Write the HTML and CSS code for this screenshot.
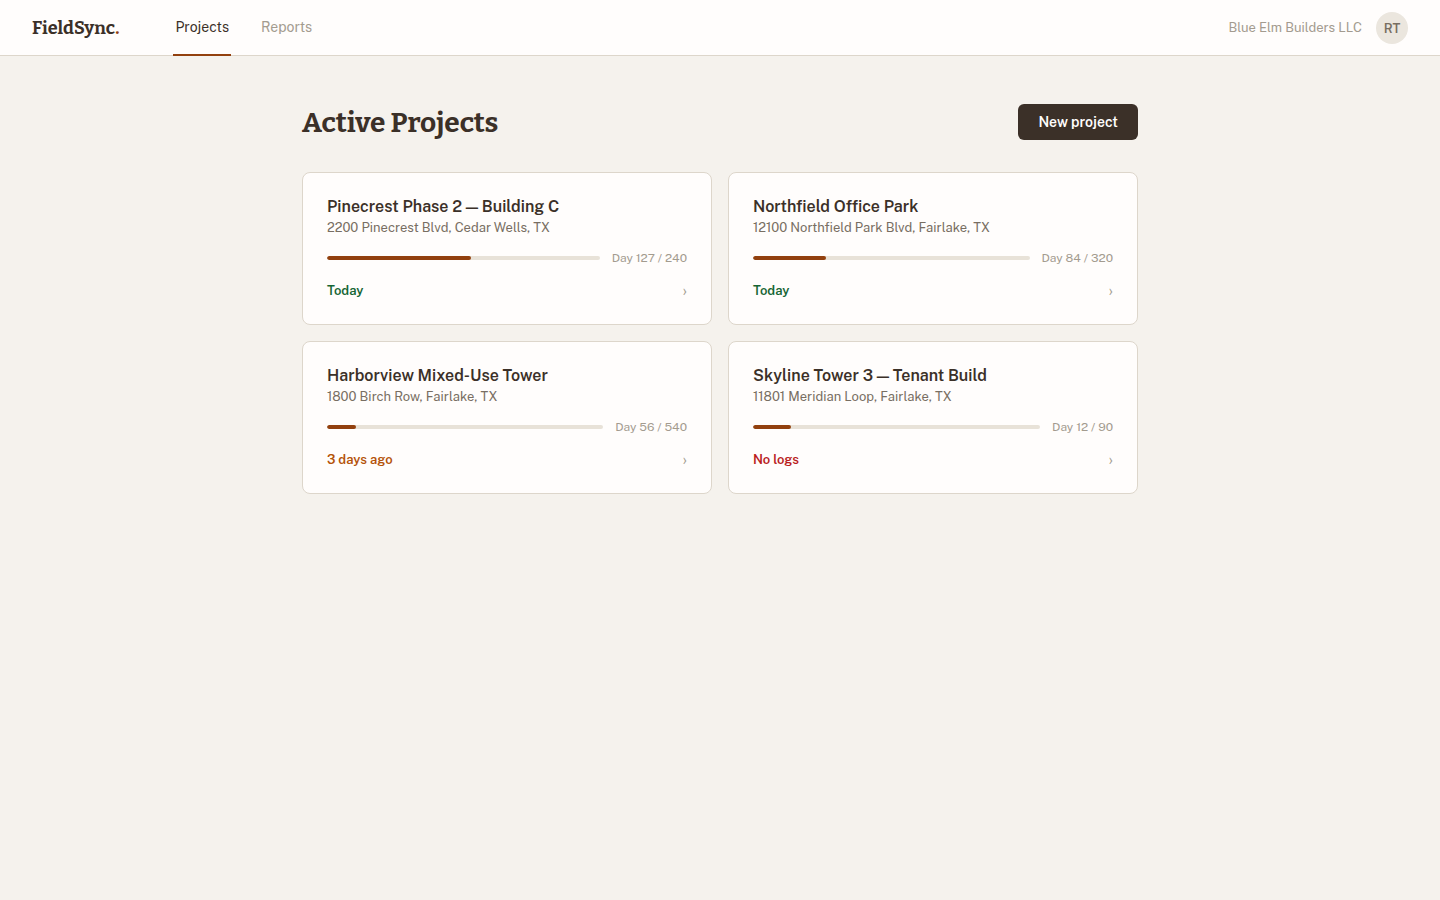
FILE: index.html
```html
<!DOCTYPE html>
<html lang="en">
<head>
<meta charset="utf-8">
<meta name="viewport" content="width=device-width, initial-scale=1">
<title>FieldSync – Active Projects</title>
<link rel="stylesheet" href="styles.css">
</head>
<body>
<header class="topbar">
  <a class="brand" href="#">FieldSync<span class="brand-dot">.</span></a>
  <nav class="tabs">
    <a class="tab tab-active" href="#" aria-current="page">Projects</a>
    <a class="tab" href="#">Reports</a>
  </nav>
  <div class="account">
    <span class="company">Blue Elm Builders LLC</span>
    <button class="avatar" type="button" aria-label="Account: RT">RT</button>
  </div>
</header>
<main class="page">
  <div class="page-head">
    <h1 class="page-title">Active Projects</h1>
    <button class="primary" type="button">New project</button>
  </div>
  <div class="projects">
    <a class="card" href="#">
      <h2 class="card-title">Pinecrest Phase 2 — Building C</h2>
      <p class="address">2200 Pinecrest Blvd, Cedar Wells, TX</p>
      <div class="progress">
        <div class="track"><div class="fill" style="width:52.9%"></div></div>
        <span class="days">Day 127 / 240</span>
      </div>
      <div class="card-foot"><span class="status status-ok">Today</span><span class="chevron">›</span></div>
    </a>
    <a class="card" href="#">
      <h2 class="card-title">Northfield Office Park</h2>
      <p class="address">12100 Northfield Park Blvd, Fairlake, TX</p>
      <div class="progress">
        <div class="track"><div class="fill" style="width:26.25%"></div></div>
        <span class="days">Day 84 / 320</span>
      </div>
      <div class="card-foot"><span class="status status-ok">Today</span><span class="chevron">›</span></div>
    </a>
    <a class="card" href="#">
      <h2 class="card-title">Harborview Mixed-Use Tower</h2>
      <p class="address">1800 Birch Row, Fairlake, TX</p>
      <div class="progress">
        <div class="track"><div class="fill" style="width:10.4%"></div></div>
        <span class="days">Day 56 / 540</span>
      </div>
      <div class="card-foot"><span class="status status-late">3 days ago</span><span class="chevron">›</span></div>
    </a>
    <a class="card" href="#">
      <h2 class="card-title">Skyline Tower 3 — Tenant Build</h2>
      <p class="address">11801 Meridian Loop, Fairlake, TX</p>
      <div class="progress">
        <div class="track"><div class="fill" style="width:13.3%"></div></div>
        <span class="days">Day 12 / 90</span>
      </div>
      <div class="card-foot"><span class="status status-none">No logs</span><span class="chevron">›</span></div>
    </a>
  </div>
</main>
</body>
</html>
```
FILE: styles.css
```css
* { box-sizing: border-box; }
body {
  margin: 0;
  min-height: 100vh;
  background: #f5f2ed;
  color: #3b3028;
  font-family: "Public Sans", Inter, "Liberation Sans", sans-serif;
  font-size: 14px;
}
a { color: inherit; text-decoration: none; }
h1, h2, p { margin: 0; }
button { border: 0; font: inherit; cursor: pointer; }

.topbar {
  display: flex;
  align-items: stretch;
  height: 56px;
  padding: 0 32px;
  background: #fffdfc;
  box-shadow: inset 0 -1px #ddd6cb;
}
.brand {
  align-self: center;
  margin-right: 54px;
  font-family: Bitter, "DejaVu Serif Condensed", "DejaVu Serif", serif;
  font-size: 18px;
  line-height: 24px;
  font-weight: 700;
}
.brand-dot { color: #92400e; }
.tabs { display: flex; gap: 28px; }
.tab {
  display: flex;
  align-items: center;
  padding: 0 2px;
  border-bottom: 2px solid transparent;
  color: #a39b8f;
}
.tab-active { color: #3b3028; border-bottom-color: #92400e; }
.account { display: flex; align-items: center; gap: 14px; margin-left: auto; }
.company { color: #a39b8f; font-size: 13px; line-height: 18px; padding-bottom: 1px; }
.avatar {
  width: 32px;
  height: 32px;
  padding: 0;
  border-radius: 50%;
  background: #ebe6de;
  color: #786e62;
  font-size: 13px;
  font-weight: 600;
}

.page { max-width: 900px; margin: 0 auto; padding: 48px 32px; }
.page-head {
  display: flex;
  align-items: center;
  justify-content: space-between;
  margin-bottom: 32px;
}
.page-title {
  padding-top: 2px;
  font-family: Bitter, "DejaVu Serif Condensed", "DejaVu Serif", serif;
  font-size: 28px;
  line-height: 34px;
  font-weight: 700;
}
.primary {
  padding: 0 20px;
  border-radius: 6px;
  background: #3b3028;
  color: #fffdfc;
  font-weight: 600;
  line-height: 36px;
}

.projects { display: grid; grid-template-columns: 1fr 1fr; gap: 16px; }
.card {
  padding: 24px;
  border: 1px solid #ddd6cb;
  border-radius: 8px;
  background: #fffdfc;
}
.card-title { font-size: 16px; line-height: 19px; font-weight: 600; }
.address { margin-top: 2px; color: #786e62; font-size: 13px; line-height: 20px; }
.progress { display: flex; align-items: center; gap: 12px; margin-top: 12px; }
.track { flex: 1; height: 4px; border-radius: 2px; background: #e8e2d8; overflow: hidden; }
.fill { height: 100%; border-radius: 2px; background: #92400e; }
.days { color: #a39b8f; font-size: 12px; line-height: 16px; }
.card-foot {
  display: flex;
  align-items: center;
  justify-content: space-between;
  margin-top: 16px;
  font-size: 13px;
  line-height: 18px;
}
.status { font-weight: 600; }
.status-ok { color: #166534; }
.status-late { color: #b45309; }
.status-none { color: #b91c1c; }
.chevron { color: #a39b8f; font-size: 16px; }
```
